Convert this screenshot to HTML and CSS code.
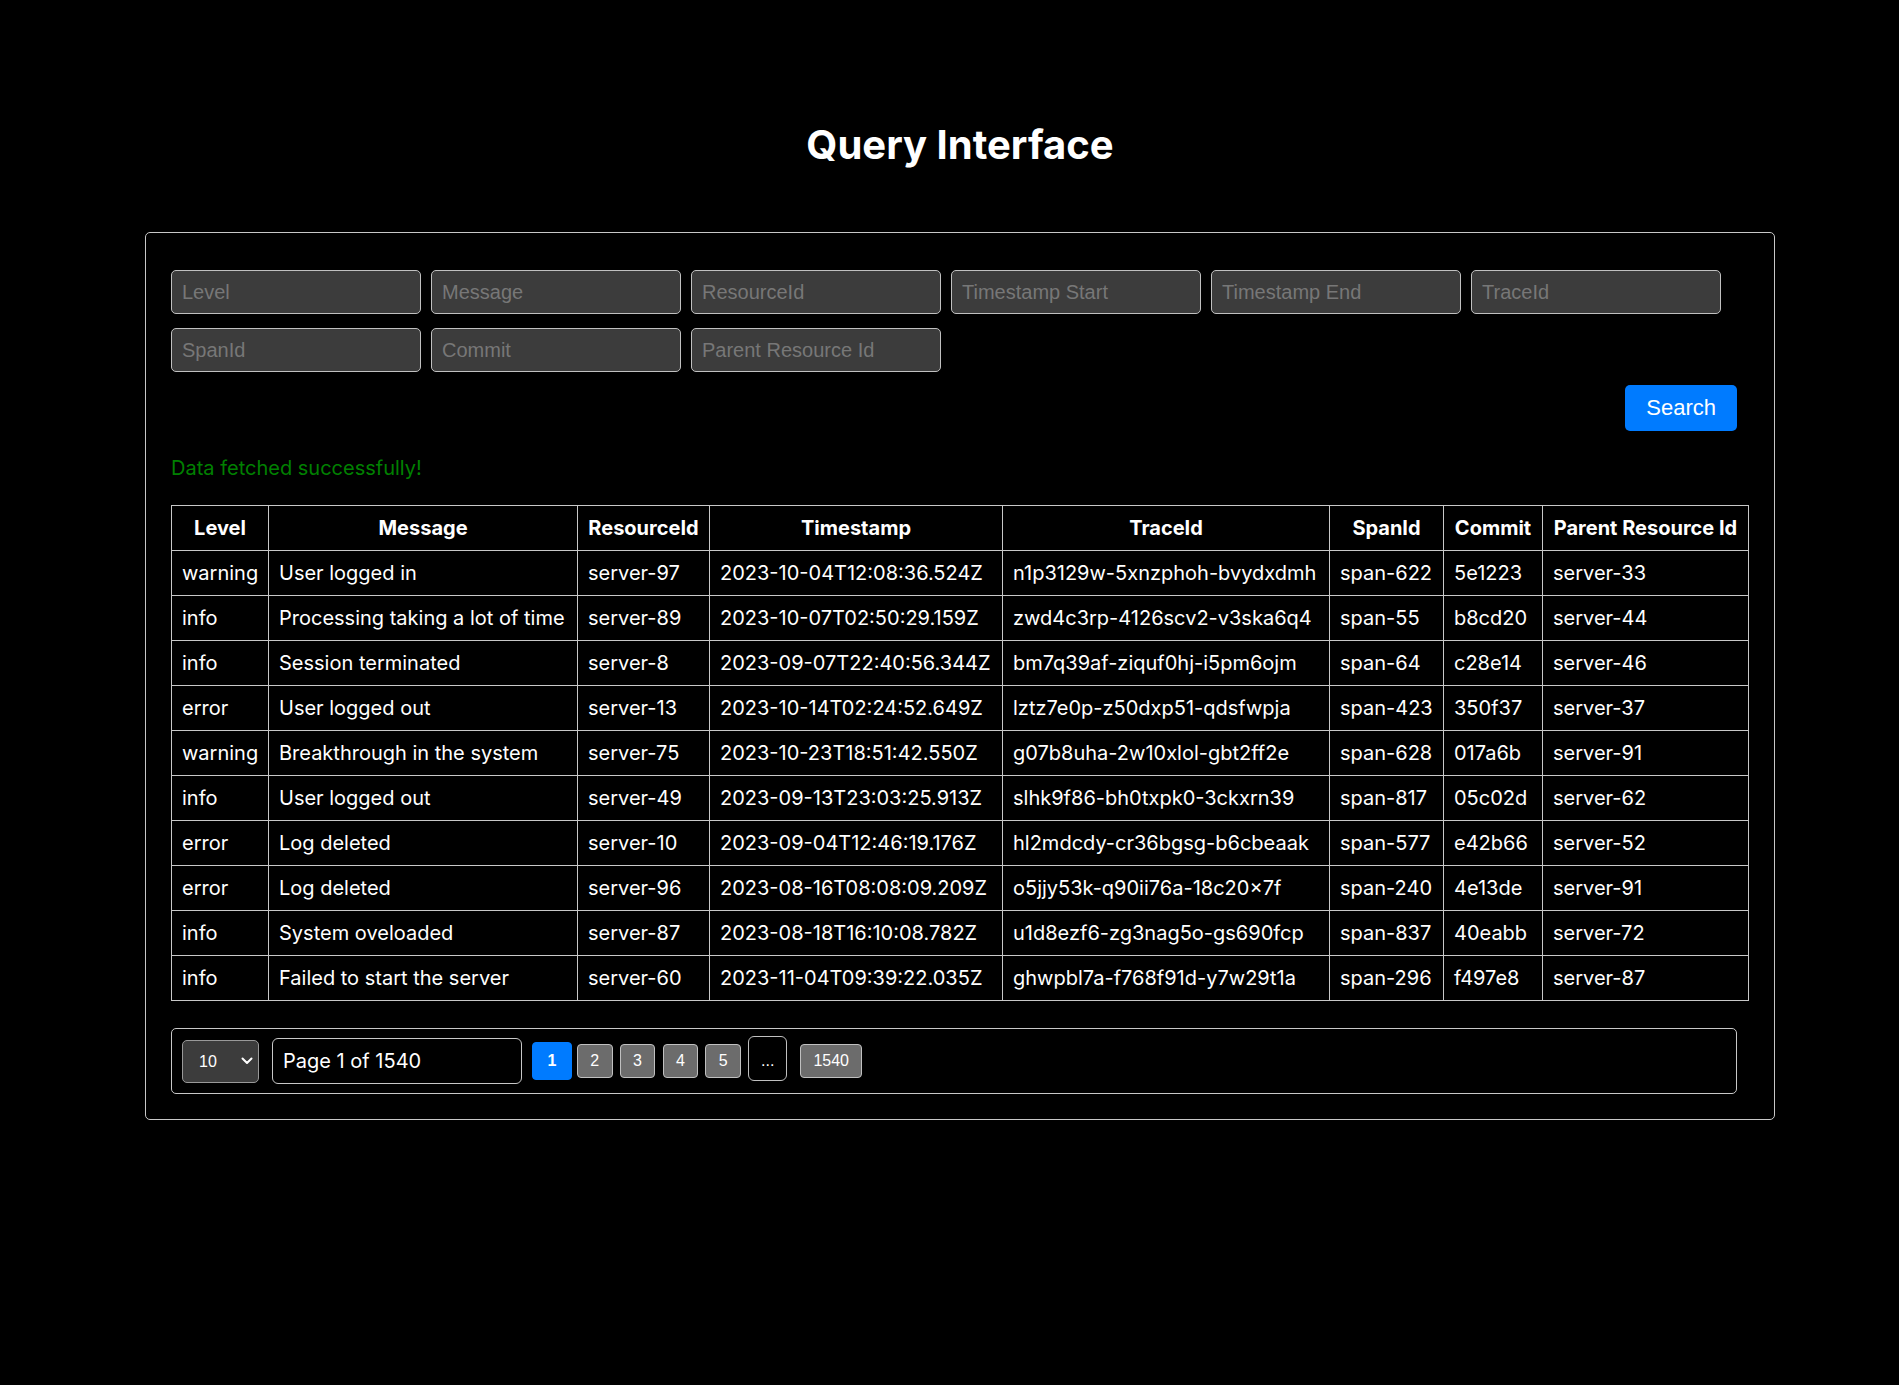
FILE: index.html
```html
<!DOCTYPE html>
<html lang="en">
<head>
<meta charset="utf-8">
<title>Query Interface</title>
<link rel="stylesheet" href="styles.css">
</head>
<body>
<div class="page">
  <h1 class="title">Query Interface</h1>
  <div class="panel">
    <div class="filters">
      <input class="filter" type="text" placeholder="Level">
      <input class="filter" type="text" placeholder="Message">
      <input class="filter" type="text" placeholder="ResourceId">
      <input class="filter" type="text" placeholder="Timestamp Start">
      <input class="filter" type="text" placeholder="Timestamp End">
      <input class="filter" type="text" placeholder="TraceId">
      <input class="filter" type="text" placeholder="SpanId">
      <input class="filter" type="text" placeholder="Commit">
      <input class="filter" type="text" placeholder="Parent Resource Id">
    </div>
    <div class="actions">
      <button class="search-btn" type="button">Search</button>
    </div>
    <p class="status">Data fetched successfully!</p>
    <table class="logs">
      <colgroup>
        <col class="c-level"><col class="c-msg"><col class="c-res"><col class="c-ts"><col class="c-trace"><col class="c-span"><col class="c-commit"><col class="c-parent">
      </colgroup>
      <thead>
        <tr><th>Level</th><th>Message</th><th>ResourceId</th><th>Timestamp</th><th>TraceId</th><th>SpanId</th><th>Commit</th><th>Parent Resource Id</th></tr>
      </thead>
      <tbody>
        <tr><td>warning</td><td>User logged in</td><td>server-97</td><td>2023-10-04T12:08:36.524Z</td><td>n1p3129w-5xnzphoh-bvydxdmh</td><td>span-622</td><td>5e1223</td><td>server-33</td></tr>
        <tr><td>info</td><td>Processing taking a lot of time</td><td>server-89</td><td>2023-10-07T02:50:29.159Z</td><td>zwd4c3rp-4126scv2-v3ska6q4</td><td>span-55</td><td>b8cd20</td><td>server-44</td></tr>
        <tr><td>info</td><td>Session terminated</td><td>server-8</td><td>2023-09-07T22:40:56.344Z</td><td>bm7q39af-ziquf0hj-i5pm6ojm</td><td>span-64</td><td>c28e14</td><td>server-46</td></tr>
        <tr><td>error</td><td>User logged out</td><td>server-13</td><td>2023-10-14T02:24:52.649Z</td><td>lztz7e0p-z50dxp51-qdsfwpja</td><td>span-423</td><td>350f37</td><td>server-37</td></tr>
        <tr><td>warning</td><td>Breakthrough in the system</td><td>server-75</td><td>2023-10-23T18:51:42.550Z</td><td>g07b8uha-2w10xlol-gbt2ff2e</td><td>span-628</td><td>017a6b</td><td>server-91</td></tr>
        <tr><td>info</td><td>User logged out</td><td>server-49</td><td>2023-09-13T23:03:25.913Z</td><td>slhk9f86-bh0txpk0-3ckxrn39</td><td>span-817</td><td>05c02d</td><td>server-62</td></tr>
        <tr><td>error</td><td>Log deleted</td><td>server-10</td><td>2023-09-04T12:46:19.176Z</td><td>hl2mdcdy-cr36bgsg-b6cbeaak</td><td>span-577</td><td>e42b66</td><td>server-52</td></tr>
        <tr><td>error</td><td>Log deleted</td><td>server-96</td><td>2023-08-16T08:08:09.209Z</td><td>o5jjy53k-q90ii76a-18c20x7f</td><td>span-240</td><td>4e13de</td><td>server-91</td></tr>
        <tr><td>info</td><td>System oveloaded</td><td>server-87</td><td>2023-08-18T16:10:08.782Z</td><td>u1d8ezf6-zg3nag5o-gs690fcp</td><td>span-837</td><td>40eabb</td><td>server-72</td></tr>
        <tr><td>info</td><td>Failed to start the server</td><td>server-60</td><td>2023-11-04T09:39:22.035Z</td><td>ghwpbl7a-f768f91d-y7w29t1a</td><td>span-296</td><td>f497e8</td><td>server-87</td></tr>
      </tbody>
    </table>
    <div class="pager">
      <div class="size-wrap">
        <select class="page-size">
          <option>10</option>
          <option>20</option>
          <option>50</option>
        </select>
        <svg class="chevron" width="12" height="8" viewBox="0 0 12 8" aria-hidden="true"><path d="M1.5 1.5 L6 6 L10.5 1.5" fill="none" stroke="#fff" stroke-width="2" stroke-linecap="round" stroke-linejoin="round"/></svg>
      </div>
      <div class="page-label">Page 1 of 1540</div>
      <div class="pages">
        <button class="pg pg-active" type="button">1</button>
        <button class="pg" type="button">2</button>
        <button class="pg" type="button">3</button>
        <button class="pg" type="button">4</button>
        <button class="pg" type="button">5</button>
        <span class="pg-dots">...</span>
        <button class="pg pg-last" type="button">1540</button>
      </div>
    </div>
  </div>
</div>
</body>
</html>
```
FILE: styles.css
```css
html, body {
  margin: 0;
  background: #000;
}

body {
  color: #fff;
  font-family: Inter, "Liberation Sans", Arial, sans-serif;
  font-size: 20px;
}

.page {
  padding: 121px 0 40px 21px;
}

.title {
  margin: 0 0 63px;
  text-align: center;
  font-size: 40px;
  font-weight: 700;
  line-height: 48px;
}

.panel {
  width: 1630px;
  box-sizing: border-box;
  margin: 0 auto;
  border: 1px solid #c8c8c8;
  border-radius: 5px;
  padding: 37px 25px 25px;
}

.filters {
  display: flex;
  flex-wrap: wrap;
  column-gap: 10px;
  row-gap: 14px;
}

.filter {
  width: 250px;
  height: 44px;
  box-sizing: border-box;
  margin: 0;
  padding: 0 10px;
  font-family: "Liberation Sans", Arial, sans-serif;
  font-size: 20px;
  color: #fff;
  background: #3c3c3c;
  border: 1px solid #c0c0c0;
  border-radius: 5px;
  outline: none;
}

.filter::placeholder {
  color: #777;
}

.actions {
  display: flex;
  justify-content: flex-end;
  margin-top: 13px;
  padding-right: 12px;
}

.search-btn {
  height: 46px;
  margin: 0;
  padding: 0 21px;
  font-family: "Liberation Sans", Arial, sans-serif;
  font-size: 22px;
  color: #fff;
  background: #007bff;
  border: none;
  border-radius: 5px;
}

.status {
  margin: 25px 0 0;
  color: #008000;
  line-height: 24px;
}

.logs {
  width: 100%;
  margin-top: 25px;
  border-collapse: collapse;
  table-layout: fixed;
}

.c-level { width: 97px; }
.c-msg { width: 309px; }
.c-res { width: 132px; }
.c-ts { width: 293px; }
.c-trace { width: 327px; }
.c-span { width: 114px; }
.c-commit { width: 99px; }
.c-parent { width: 206px; }

.logs th,
.logs td {
  border: 1px solid #c8c8c8;
  padding: 10px;
  line-height: 24px;
  white-space: nowrap;
  text-align: left;
  overflow: visible;
}

.logs th {
  text-align: center;
  font-weight: 700;
}

.pager {
  width: 1566px;
  height: 66px;
  box-sizing: border-box;
  margin-top: 27px;
  padding: 0 10px;
  border: 1px solid #c8c8c8;
  border-radius: 5px;
  display: flex;
  align-items: center;
}

.size-wrap {
  position: relative;
  margin-right: 13px;
}

.page-size {
  display: block;
  width: 77px;
  height: 43px;
  box-sizing: border-box;
  margin: 0;
  padding: 0 0 0 16px;
  -webkit-appearance: none;
  appearance: none;
  font-family: "Liberation Sans", Arial, sans-serif;
  font-size: 16px;
  color: #fff;
  background: #3c3c3c;
  border: 1px solid #999;
  border-radius: 5px;
  outline: none;
}

.chevron {
  position: absolute;
  right: 6px;
  top: 17px;
  pointer-events: none;
}

.page-label {
  width: 250px;
  height: 46px;
  box-sizing: border-box;
  padding: 0 10px;
  border: 1px solid #c8c8c8;
  border-radius: 6px;
  display: flex;
  align-items: center;
  line-height: 24px;
  margin-right: 10px;
}

.pages {
  display: flex;
  align-items: center;
}

.pg {
  height: 34px;
  margin: 0 0 0 7.3px;
  padding: 0 12.3px;
  font-family: "Liberation Sans", Arial, sans-serif;
  font-size: 16px;
  color: #fff;
  background: #6c6c6c;
  border: 1px solid #c0c0c0;
  border-radius: 4px;
}

.pg-active {
  height: 38px;
  width: 40px;
  margin-left: 0;
  padding: 0;
  font-weight: 700;
  background: #007bff;
  border-color: #007bff;
}

.pg-active + .pg {
  margin-left: 5px;
}

.pg-dots {
  height: 45px;
  box-sizing: border-box;
  margin: 0 0 5px 7.3px;
  padding: 0 11.8px;
  display: flex;
  align-items: center;
  padding-top: 4px;
  font-family: "Liberation Sans", Arial, sans-serif;
  font-size: 16px;
  background: #000;
  border: 1px solid #c0c0c0;
  border-radius: 6px;
}

.pg-last {
  margin-left: 13px;
}
```
